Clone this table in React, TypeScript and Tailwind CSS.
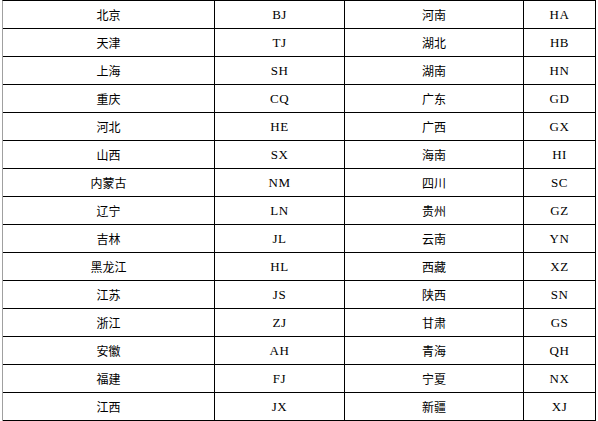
import React from "react";

const rows: [string, string, string, string][] = [
  ["北京", "BJ", "河南", "HA"],
  ["天津", "TJ", "湖北", "HB"],
  ["上海", "SH", "湖南", "HN"],
  ["重庆", "CQ", "广东", "GD"],
  ["河北", "HE", "广西", "GX"],
  ["山西", "SX", "海南", "HI"],
  ["内蒙古", "NM", "四川", "SC"],
  ["辽宁", "LN", "贵州", "GZ"],
  ["吉林", "JL", "云南", "YN"],
  ["黑龙江", "HL", "西藏", "XZ"],
  ["江苏", "JS", "陕西", "SN"],
  ["浙江", "ZJ", "甘肃", "GS"],
  ["安徽", "AH", "青海", "QH"],
  ["福建", "FJ", "宁夏", "NX"],
  ["江西", "JX", "新疆", "XJ"],
];

const cn = "font-['Noto_Sans_CJK_SC',sans-serif] text-[12px] leading-none text-black";
const en = "font-['Liberation_Serif',serif] text-[13px] tracking-[0.5px] leading-none text-black";

export default function App() {
  return (
    <div className="w-[598px] h-[421px] bg-white">
      <div className="ml-[2px] w-[594px] border-l border-l-[#a0a0a0] border-t border-t-black">
        {rows.map((r, i) => (
          <div key={i} className="flex h-[28px] border-b border-b-black">
            <div className={`w-[212px] border-r border-r-black flex items-center justify-center ${cn}`}>{r[0]}</div>
            <div className={`w-[130px] border-r border-r-black flex items-center justify-center ${en}`}>{r[1]}</div>
            <div className={`w-[179px] border-r border-r-black flex items-center justify-center ${cn}`}>{r[2]}</div>
            <div className={`w-[72px] border-r border-r-black flex items-center justify-center ${en}`}>{r[3]}</div>
          </div>
        ))}
      </div>
    </div>
  );
}
